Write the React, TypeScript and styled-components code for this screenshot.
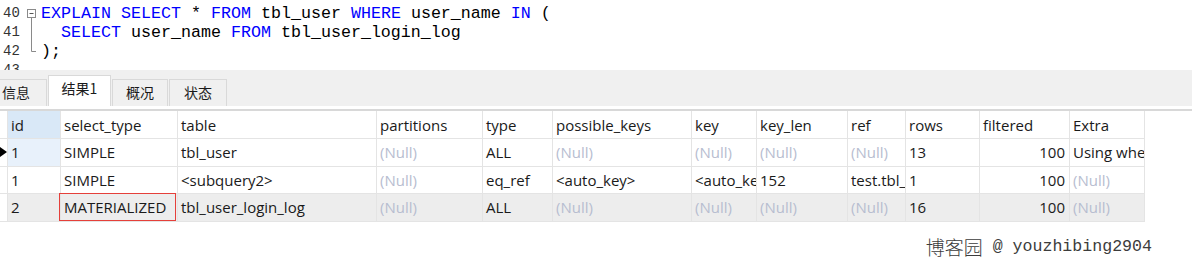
import React from "react";
import styled, { createGlobalStyle, css } from "styled-components";

const Global = createGlobalStyle`
  html, body { margin: 0; padding: 0; background: #ffffff; }
  body { width: 1192px; height: 269px; overflow: hidden; }
  #root { width: 1192px; height: 269px; overflow: hidden; }
`;

const Page = styled.div`
  display: flex;
  flex-direction: column;
  width: 1192px;
  height: 269px;
  overflow: hidden;
  background: #ffffff;
`;

/* ---------- Editor ---------- */
const Editor = styled.div`
  display: flex;
  height: 70px;
  overflow: hidden;
  background: #ffffff;
  flex-shrink: 0;
`;

const LineNumbers = styled.div`
  width: 24px;
  padding: 4px 0 0 3px;
  box-sizing: border-box;
  font-family: "Liberation Mono", "DejaVu Sans Mono", monospace;
  font-size: 14px;
  line-height: 19px;
  color: #333333;
`;

const LineNo = styled.div`
  height: 19px;
`;

const FoldColumn = styled.div`
  width: 14px;
  flex-shrink: 0;
`;

const Code = styled.div`
  padding: 4px 0 0 3px;
  font-family: "Liberation Mono", "Courier New", monospace;
  font-size: 16.67px;
  line-height: 19px;
  color: #000000;
  white-space: pre;
`;

const CodeLine = styled.div`
  height: 19px;
`;

const Kw = styled.span`
  color: #0000ff;
`;

/* ---------- Tabs ---------- */
const TabBar = styled.div`
  display: flex;
  align-items: flex-end;
  gap: 1px;
  height: 36px;
  background: #f0f0f0;
  flex-shrink: 0;
`;

const Tab = styled.div<{ $active?: boolean; $w: number; $first?: boolean }>`
  box-sizing: border-box;
  width: ${(p) => p.$w}px;
  margin-left: ${(p) => (p.$first ? "-15px" : "0")};
  display: flex;
  justify-content: center;
  align-items: flex-start;
  padding-top: 2px;
  font-family: "Noto Sans CJK SC", "Microsoft YaHei", sans-serif;
  font-size: 14px;
  line-height: 20px;
  color: #1a1a1a;
  border: 1px solid #d9d9d9;
  border-bottom: none;
  ${(p) =>
    p.$active
      ? css`
          height: 31px;
          background: #ffffff;
        `
      : css`
          height: 27px;
          background: #f0f0f0;
        `}
`;

const Gap = styled.div`
  height: 3px;
  flex-shrink: 0;
`;

const Separator = styled.div`
  height: 2px;
  background: #d8d8d8;
  flex-shrink: 0;
`;

/* ---------- Grid ---------- */
const COLS = [8, 53, 117, 199, 106, 70, 139, 65, 91, 58, 74, 90, 75];

const Grid = styled.div`
  width: 1145px;
  font-family: "Open Sans", "Noto Sans", sans-serif;
  font-size: 15px;
  color: #1a1a1a;
  flex-shrink: 0;
`;

const Row = styled.div<{ $h: number; $shade?: boolean }>`
  display: grid;
  grid-template-columns: ${COLS.map((c) => c + "px").join(" ")};
  height: ${(p) => p.$h}px;
  background: ${(p) => (p.$shade ? "#ededed" : "#ffffff")};
`;

const Cell = styled.div<{
  $right?: boolean;
  $null?: boolean;
  $bg?: string;
  $marked?: boolean;
}>`
  position: relative;
  box-sizing: border-box;
  display: flex;
  align-items: center;
  justify-content: ${(p) => (p.$right ? "flex-end" : "flex-start")};
  padding: 0 ${(p) => (p.$right ? "4px" : "0")} 0 ${(p) => (p.$right ? "0" : "3px")};
  border-right: 1px solid #e4e4e4;
  border-bottom: 1px solid #e4e4e4;
  white-space: nowrap;
  overflow: ${(p) => (p.$marked ? "visible" : "hidden")};
  color: ${(p) => (p.$null ? "#b7bdd0" : "#1a1a1a")};
  ${(p) => (p.$bg ? `background: ${p.$bg};` : "")}
  ${(p) =>
    p.$marked &&
    css`
      &::after {
        content: "";
        position: absolute;
        left: -2px;
        right: 1px;
        top: -1px;
        bottom: 0;
        border: 1px solid #e5403a;
        pointer-events: none;
      }
    `}
`;

const IndicatorCell = styled.div`
  box-sizing: border-box;
  display: flex;
  align-items: center;
  border-right: 1px solid #e4e4e4;
  border-bottom: 1px solid #e4e4e4;
  background: #ffffff;
`;

const Footer = styled.div`
  flex: 1;
  display: flex;
  justify-content: flex-end;
  align-items: center;
  padding: 3px 40px 0 0;
  color: #3c3c3c;
`;

const WmCjk = styled.span`
  font-family: "Noto Sans CJK SC", sans-serif;
  font-size: 19px;
  font-weight: 300;
  line-height: 24px;
`;

const WmLatin = styled.span`
  font-family: "Liberation Mono", monospace;
  font-size: 16.6px;
  line-height: 24px;
  white-space: pre;
`;

type V = string | number | null;

const headers = [
  "id",
  "select_type",
  "table",
  "partitions",
  "type",
  "possible_keys",
  "key",
  "key_len",
  "ref",
  "rows",
  "filtered",
  "Extra",
];

const rows: V[][] = [
  [1, "SIMPLE", "tbl_user", null, "ALL", null, null, null, null, 13, 100, "Using where"],
  [1, "SIMPLE", "<subquery2>", null, "eq_ref", "<auto_key>", "<auto_key>", 152, "test.tbl_user.user_name", 1, 100, null],
  [2, "MATERIALIZED", "tbl_user_login_log", null, "ALL", null, null, null, null, 16, 100, null],
];

const RIGHT_COL = 10; // filtered

const Arrow = () => (
  <svg width="7" height="10" viewBox="0 0 7 10">
    <polygon points="0,0 7,5 0,10" fill="#000" />
  </svg>
);

const Fold = () => (
  <svg width="14" height="70" viewBox="0 0 14 70">
    <rect x="3.5" y="9.5" width="8" height="8" fill="#fff" stroke="#8a8a8a" />
    <line x1="5.5" y1="13.5" x2="9.5" y2="13.5" stroke="#555" />
    <line x1="7.5" y1="17.5" x2="7.5" y2="51.5" stroke="#8a8a8a" />
    <line x1="7.5" y1="51.5" x2="12" y2="51.5" stroke="#8a8a8a" />
  </svg>
);

export default function App() {
  const rowHeights = [27.5, 27.5, 27.5];
  return (
    <Page>
      <Global />
      <Editor>
        <LineNumbers>
          <LineNo>40</LineNo>
          <LineNo>41</LineNo>
          <LineNo>42</LineNo>
          <LineNo>43</LineNo>
        </LineNumbers>
        <FoldColumn>
          <Fold />
        </FoldColumn>
        <Code>
          <CodeLine>
            <Kw>EXPLAIN</Kw> <Kw>SELECT</Kw> * <Kw>FROM</Kw> tbl_user <Kw>WHERE</Kw> user_name <Kw>IN</Kw> (
          </CodeLine>
          <CodeLine>
            {"  "}
            <Kw>SELECT</Kw> user_name <Kw>FROM</Kw> tbl_user_login_log
          </CodeLine>
          <CodeLine>);</CodeLine>
        </Code>
      </Editor>

      <TabBar>
        <Tab $w={62} $first>信息</Tab>
        <Tab $w={63} $active>结果1</Tab>
        <Tab $w={56}>概况</Tab>
        <Tab $w={58}>状态</Tab>
      </TabBar>
      <Gap />
      <Separator />

      <Grid>
        <Row $h={28}>
          <IndicatorCell />
          {headers.map((h, i) => (
            <Cell key={h} $bg={i === 0 ? "#d9e8f7" : undefined}>
              {h}
            </Cell>
          ))}
        </Row>
        {rows.map((r, ri) => (
          <Row key={ri} $h={rowHeights[ri]} $shade={ri === 2}>
            <IndicatorCell>{ri === 0 ? <Arrow /> : null}</IndicatorCell>
            {r.map((v, ci) => (
              <Cell
                key={ci}
                $null={v === null}
                $right={ci === RIGHT_COL}
                $bg={ri === 0 && ci === 0 ? "#e8f1fb" : undefined}
                $marked={ri === 2 && ci === 1}
              >
                {v === null ? "(Null)" : String(v)}
              </Cell>
            ))}
          </Row>
        ))}
      </Grid>

      <Footer>
        <WmCjk>博客园</WmCjk>
        <WmLatin> @ youzhibing2904</WmLatin>
      </Footer>
    </Page>
  );
}
